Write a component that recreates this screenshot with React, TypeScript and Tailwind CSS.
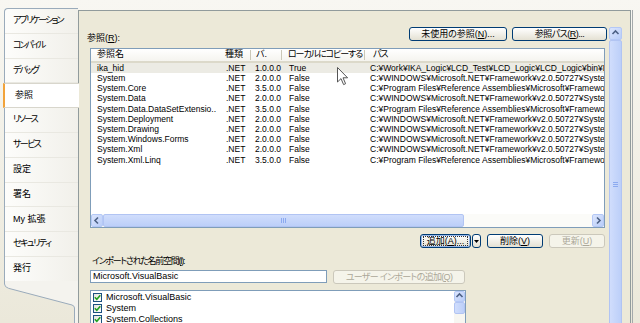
import React from "react";

type Ref = { name: string; type: string; ver: string; copy: string; path: string };

const WIN = "C:¥WINDOWS¥Microsoft.NET¥Framework¥v2.0.50727¥";
const PF = "C:¥Program Files¥Reference Assemblies¥Microsoft¥Framework¥v3.5¥";

const refs: Ref[] = [
  { name: "ika_hid", type: ".NET", ver: "1.0.0.0", copy: "True", path: "C:¥Work¥IKA_Logic¥LCD_Test¥LCD_Logic¥LCD_Logic¥bin¥Debug¥ika_hid.dll" },
  { name: "System", type: ".NET", ver: "2.0.0.0", copy: "False", path: WIN + "System.dll" },
  { name: "System.Core", type: ".NET", ver: "3.5.0.0", copy: "False", path: PF + "System.Core.dll" },
  { name: "System.Data", type: ".NET", ver: "2.0.0.0", copy: "False", path: WIN + "System.Data.dll" },
  { name: "System.Data.DataSetExtensio..", type: ".NET", ver: "3.5.0.0", copy: "False", path: PF + "System.Data.DataSetExtensions.dll" },
  { name: "System.Deployment", type: ".NET", ver: "2.0.0.0", copy: "False", path: WIN + "System.Deployment.dll" },
  { name: "System.Drawing", type: ".NET", ver: "2.0.0.0", copy: "False", path: WIN + "System.Drawing.dll" },
  { name: "System.Windows.Forms", type: ".NET", ver: "2.0.0.0", copy: "False", path: WIN + "System.Windows.Forms.dll" },
  { name: "System.Xml", type: ".NET", ver: "2.0.0.0", copy: "False", path: WIN + "System.Xml.dll" },
  { name: "System.Xml.Linq", type: ".NET", ver: "3.5.0.0", copy: "False", path: PF + "System.Xml.Linq.dll" },
];

// kana labels get squeezed so they come out as narrow as the old UI font
const tabs = [
  { label: "アプリケーション", tight: "tracking-[-1.8px]" },
  { label: "コンパイル", tight: "tracking-[-2px]" },
  { label: "デバッグ", tight: "tracking-[-1.8px]" },
  { label: "参照", tight: "" },
  { label: "リソース", tight: "tracking-[-1.8px]" },
  { label: "サービス", tight: "tracking-[-1.6px]" },
  { label: "設定", tight: "" },
  { label: "署名", tight: "" },
  { label: "My 拡張", tight: "" },
  { label: "セキュリティ", tight: "tracking-[-1.5px]" },
  { label: "発行", tight: "" },
];

const imports = ["Microsoft.VisualBasic", "System", "System.Collections"];

const XpButton = ({
  children,
  className = "",
  disabled = false,
  focused = false,
}: {
  children: React.ReactNode;
  className?: string;
  disabled?: boolean;
  focused?: boolean;
}) => (
  <div
    className={
      "h-[14px] rounded-[3px] border flex items-center justify-center text-[9px] leading-none whitespace-nowrap " +
      (disabled
        ? "border-[#cbc8bb] bg-[#f5f4ea] text-[#aca899] "
        : "border-[#003c74] bg-gradient-to-b from-white to-[#e4e1d3] text-black ") +
      className
    }
  >
    {focused ? (
      <span className="flex items-center justify-center w-[calc(100%-4px)] h-[10px] border border-dotted border-[#333]">{children}</span>
    ) : (
      children
    )}
  </div>
);

const Chevron = ({ dir }: { dir: "up" | "left" | "right" }) => {
  const d = dir === "up" ? "M1.5 5 L4.5 2 L7.5 5" : dir === "left" ? "M5 1.5 L2 4.5 L5 7.5" : "M3 1.5 L6 4.5 L3 7.5";
  return (
    <svg width="9" height="9" viewBox="0 0 9 9">
      <path d={d} fill="none" stroke="#4d6185" strokeWidth="1.6" />
    </svg>
  );
};

const ArrowBtn = ({ dir, className = "" }: { dir: "up" | "left" | "right"; className?: string }) => (
  <div className={"flex items-center justify-center rounded-[2px] border border-[#b4c8f6] bg-gradient-to-br from-[#dbe5fd] to-[#b9cdf8] " + className}>
    <Chevron dir={dir} />
  </div>
);

const Grip = ({ vertical }: { vertical?: boolean }) =>
  vertical ? (
    <div className="flex flex-col gap-[1px]">
      <div className="w-[5px] h-[1px] bg-[#8caaf0]" />
      <div className="w-[5px] h-[1px] bg-[#8caaf0]" />
      <div className="w-[5px] h-[1px] bg-[#8caaf0]" />
    </div>
  ) : (
    <div className="flex gap-[1px]">
      <div className="w-[1px] h-[5px] bg-[#8caaf0]" />
      <div className="w-[1px] h-[5px] bg-[#8caaf0]" />
      <div className="w-[1px] h-[5px] bg-[#8caaf0]" />
    </div>
  );

const App: React.FC = () => {
  return (
    <div className="relative w-[640px] h-[323px] overflow-hidden flex bg-gradient-to-b from-[#f8f7f2] to-[#ebe8da] text-black font-['Liberation_Sans','Noto_Sans_CJK_JP',sans-serif] [font-feature-settings:'palt']">
      {/* tab strip */}
      <div className="relative w-[78px] shrink-0 pt-[8px] pl-[4px]">
        <div className="border-l border-t border-[#9aabbb] rounded-tl-[4px] bg-gradient-to-r from-[#fdfdfb] to-[#f1f0ea]">
          {tabs.map((t) =>
            t.label === "参照" ? (
              <div
                key={t.label}
                className="relative z-10 -ml-[2px] w-[76px] h-[24.8px] flex items-center pl-[10px] bg-white border-l-2 border-l-[#f2a33a] border-y border-y-[#d8d6cc] text-[9px]"
              >
                {t.label}
              </div>
            ) : (
              <div key={t.label} className={"h-[24.8px] flex items-center pl-[8px] border-b border-[#e9e8e1] text-[9px] whitespace-nowrap " + t.tight}>
                {t.label}
              </div>
            )
          )}
        </div>
        <svg className="absolute left-0 top-[281px]" width="78" height="42" viewBox="0 0 78 42">
          <path d="M4 0 V3 Q4 6 8 7.3 L72 24 Q74 24.8 74 27 V42 H78 V0 Z" fill="#f4f3ee" />
          <path d="M4.5 0 V3 Q4.5 6 8.5 7.3 L72 24 Q74.5 24.8 74.5 27 V42" fill="none" stroke="#9aabbb" />
        </svg>
      </div>

      {/* property page */}
      <div className="mt-[10px] w-[553px] h-[320px] shrink-0 border-l border-t border-r border-[#919b9c] bg-[#ece9d8] flex pt-[16px]">
        <div className="ml-[11px] w-[517px] flex flex-col">
          <div className="h-[16px] flex justify-between">
            <div className="self-end -ml-[3px] text-[9px] leading-[10px]">
              参照(<u>R</u>):
            </div>
            <div className="flex gap-[5px]">
              <XpButton className="w-[98px]">
                未使用の参照(<u>N</u>)...
              </XpButton>
              <XpButton className="w-[95px] tracking-[-0.5px]">
                参照パス(<u>R</u>)...
              </XpButton>
            </div>
          </div>

          {/* references list */}
          <div className="relative mt-[5px] mr-[2px] h-[182px] border border-[#7f9db9] bg-white flex flex-col">
            <div className="h-[14px] flex items-center bg-gradient-to-b from-white to-[#f5f4ef] border-b-2 border-[#dcd9ca] text-[9px] whitespace-nowrap">
              <div className="w-[131px] pl-[6px]">参照名</div>
              <div className="w-[29px] pl-[3px] border-r border-[#cbc8b8] h-[10px] flex items-center">種類</div>
              <div className="w-[31px] pl-[5px] border-r border-[#cbc8b8] h-[10px] flex items-center">バ.</div>
              <div className="w-[83px] pl-[6px] border-r border-[#cbc8b8] h-[10px] flex items-center tracking-[-1.1px] overflow-hidden">ローカルにコピーする</div>
              <div className="flex-1 pl-[8px] tracking-[-1px]">パス</div>
            </div>
            <div className="flex-1 text-[8.5px] leading-[10.2px] whitespace-nowrap overflow-hidden">
              {refs.map((r, i) => (
                <div key={r.name} className={"flex h-[10.2px] " + (i === 0 ? "bg-[#ecebe4]" : "")}>
                  <div className="w-[131px] pl-[6px] overflow-hidden">{r.name}</div>
                  <div className="w-[29px] pl-[4px]">{r.type}</div>
                  <div className="w-[31px] pl-[4px]">{r.ver}</div>
                  <div className="w-[83px] pl-[7px]">{r.copy}</div>
                  <div className="flex-1 pl-[5px] overflow-hidden">{r.path}</div>
                </div>
              ))}
            </div>
            <div className="h-[13px] flex bg-[#fbfbf8]">
              <ArrowBtn dir="left" className="w-[12px] h-[13px]" />
              <div className="w-[361px] h-[13px] rounded-[2px] border border-[#b1c4f3] bg-gradient-to-b from-[#d0ddfc] to-[#bccff9] flex items-center justify-center">
                <Grip />
              </div>
              <div className="flex-1" />
              <ArrowBtn dir="right" className="w-[12px] h-[13px]" />
            </div>
            {/* mouse cursor */}
            <svg className="absolute left-[246px] top-[18px]" width="12" height="19" viewBox="0 0 12 19">
              <path d="M0.5 0.5 V15 L4 11.6 L6.6 17.6 L8.6 16.7 L6 10.8 L10.6 10.8 Z" fill="white" stroke="#555" strokeWidth="1" strokeLinejoin="round" />
            </svg>
          </div>

          <div className="mt-[6px] mr-[2px] flex justify-end">
            <XpButton focused className="w-[51px] border-[#1f3f86] shadow-[inset_0_0_0_1px_#98b8ea]">
              追加(<u>A</u>)...
            </XpButton>
            <XpButton className="ml-[1px] w-[9px] rounded-[2px]">
              <svg width="5" height="3" viewBox="0 0 5 3">
                <path d="M0 0 H5 L2.5 3 Z" fill="#000" />
              </svg>
            </XpButton>
            <XpButton className="ml-[6px] w-[56px]">
              削除(<u>V</u>)
            </XpButton>
            <XpButton disabled className="ml-[6px] w-[56px]">
              更新(<u>U</u>)
            </XpButton>
          </div>

          <div className="mt-[8px] ml-[2px] text-[9px] leading-[10px] tracking-[-1.3px] whitespace-nowrap">
            インポートされた名前空間(<u>I</u>):
          </div>
          <div className="mt-[4px] flex">
            <div className="w-[237px] h-[13px] border border-[#7f9db9] bg-white flex items-center pl-[2px] text-[9px]">
              Microsoft.VisualBasic
            </div>
            <XpButton disabled className="ml-[6px] w-[132px] h-[13px] tracking-[-0.7px]">
              ユーザー インポートの追加(<u>Q</u>)
            </XpButton>
          </div>

          <div className="mt-[6px] w-[376px] h-[40px] border border-[#7f9db9] bg-white flex">
            <div className="flex-1 pt-[1px] pl-[2px]">
              {imports.map((n) => (
                <div key={n} className="h-[11px] flex items-center gap-[4px] text-[9px]">
                  <div className="w-[9px] h-[9px] border border-[#1c5180] bg-gradient-to-br from-[#e4e3dc] to-white flex items-center justify-center">
                    <svg width="7" height="7" viewBox="0 0 7 7">
                      <path d="M0.8 3.3 L2.8 5.3 L6.3 1.3" fill="none" stroke="#21a121" strokeWidth="1.6" />
                    </svg>
                  </div>
                  {n}
                </div>
              ))}
            </div>
            <div className="w-[11px] flex flex-col bg-[#f7f6f1]">
              <ArrowBtn dir="up" className="w-[11px] h-[11px]" />
              <div className="h-[12px] rounded-[2px] border border-[#b1c4f3] bg-gradient-to-r from-[#d0ddfc] to-[#bccff9]" />
            </div>
          </div>
        </div>

        {/* outer scrollbar */}
        <div className="ml-[2px] w-[13px] flex flex-col">
          <ArrowBtn dir="up" className="w-[13px] h-[14px]" />
          <div className="h-[324px] rounded-[2px] border border-[#b1c4f3] bg-gradient-to-r from-[#d0ddfc] to-[#bccff9] flex items-center justify-center">
            <Grip vertical />
          </div>
        </div>
      </div>
      <div className="mt-[10px] ml-[1px] w-[1px] h-[320px] bg-[#a4a9ab]" />
    </div>
  );
};

export default App;
